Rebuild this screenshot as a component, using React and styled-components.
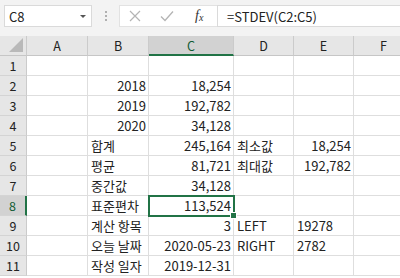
import React from 'react';
import styled, { createGlobalStyle } from 'styled-components';

const GlobalStyle = createGlobalStyle`
  html, body {
    margin: 0;
    padding: 0;
    background: #ffffff;
    overflow: hidden;
  }
  body {
    font-family: "Noto Sans CJK KR", "Noto Sans", sans-serif;
  }
`;

const COLS = ['A', 'B', 'C', 'D', 'E', 'F'];

const rows = [
  {},
  { B: ['2018', 'r'], C: ['18,254', 'r'] },
  { B: ['2019', 'r'], C: ['192,782', 'r'] },
  { B: ['2020', 'r'], C: ['34,128', 'r'] },
  { B: ['합계', 'l'], C: ['245,164', 'r'], D: ['최소값', 'l'], E: ['18,254', 'r'] },
  { B: ['평균', 'l'], C: ['81,721', 'r'], D: ['최대값', 'l'], E: ['192,782', 'r'] },
  { B: ['중간값', 'l'], C: ['34,128', 'r'] },
  { B: ['표준편차', 'l'], C: ['113,524', 'r'] },
  { B: ['계산 항목', 'l'], C: ['3', 'r'], D: ['LEFT', 'l'], E: ['19278', 'l'] },
  { B: ['오늘 날짜', 'l'], C: ['2020-05-23', 'r'], D: ['RIGHT', 'l'], E: ['2782', 'l'] },
  { B: ['작성 일자', 'l'], C: ['2019-12-31', 'r'] },
];

function App() {
  return (
    <>
      <GlobalStyle />
      <Sheet>
        <FormulaBar>
          <NameBox>
            <span>C8</span>
            <DropArrow />
          </NameBox>
          <Grip>
            <i />
            <i />
            <i />
          </Grip>
          <ActionBox>
            <svg width="12" height="12" viewBox="0 0 12 12">
              <path d="M1 1 L11 11 M11 1 L1 11" stroke="#b4b4b4" strokeWidth="1.2" fill="none" />
            </svg>
            <svg width="14" height="12" viewBox="0 0 14 12">
              <path d="M1 6.5 L5 10.5 L13 1.5" stroke="#b4b4b4" strokeWidth="1.3" fill="none" />
            </svg>
            <Fx>
              f<sub>x</sub>
            </Fx>
          </ActionBox>
          <FormulaInput>=STDEV(C2:C5)</FormulaInput>
        </FormulaBar>

        <Grid>
          <Corner>
            <svg width="16" height="16" viewBox="0 0 16 16">
              <path d="M15 1 L15 15 L1 15 Z" fill="#b9b9b9" />
            </svg>
          </Corner>
          {COLS.map((c) => (
            <ColHead key={c} $active={c === 'C'}>
              {c}
            </ColHead>
          ))}

          {rows.map((row, i) => {
            const n = i + 1;
            return (
              <React.Fragment key={n}>
                <RowHead $active={n === 8}>{n}</RowHead>
                {COLS.map((c) => {
                  const v = row[c];
                  const sel = n === 8 && c === 'C';
                  return (
                    <Cell key={c} $align={v ? v[1] : 'l'} $selected={sel}>
                      {v ? v[0] : ''}
                      {sel && <Handle />}
                    </Cell>
                  );
                })}
              </React.Fragment>
            );
          })}
        </Grid>
      </Sheet>
    </>
  );
}

export default App;

const Sheet = styled.div`
  width: 400px;
  height: 278px;
  overflow: hidden;
  background: #ffffff;
`;

const FormulaBar = styled.div`
  height: 36px;
  background: #f3f3f3;
  display: flex;
  align-items: flex-start;
  padding: 5px 0 0 4px;
  box-sizing: border-box;
`;

const NameBox = styled.div`
  width: 88px;
  height: 22px;
  box-sizing: border-box;
  background: #ffffff;
  border: 1px solid #dadada;
  display: flex;
  align-items: center;
  justify-content: space-between;
  padding: 0 5px 0 4px;
  font-size: 13px;
  color: #222;
`;

const DropArrow = styled.span`
  width: 0;
  height: 0;
  border-left: 3px solid transparent;
  border-right: 3px solid transparent;
  border-top: 3px solid #555;
`;

const Grip = styled.div`
  width: 27px;
  height: 22px;
  display: flex;
  flex-direction: column;
  align-items: center;
  justify-content: center;
  gap: 2px;

  i {
    width: 2px;
    height: 2px;
    background: #9a9a9a;
    border-radius: 1px;
  }
`;

const ActionBox = styled.div`
  width: 98px;
  height: 22px;
  box-sizing: border-box;
  background: #ffffff;
  border: 1px solid #e2e2e2;
  border-right: none;
  display: flex;
  align-items: center;
  padding-left: 9px;
  gap: 19px;
`;

const Fx = styled.span`
  font-family: "Liberation Serif", serif;
  font-style: italic;
  font-size: 14px;
  color: #333;
  margin-left: 2px;

  sub {
    font-size: 10px;
    vertical-align: -1px;
  }
`;

const FormulaInput = styled.div`
  flex: 1;
  height: 22px;
  box-sizing: border-box;
  background: #ffffff;
  border: 1px solid #dadada;
  border-right: none;
  display: flex;
  align-items: center;
  padding-left: 9px;
  font-size: 13px;
  color: #222;
`;

const Grid = styled.div`
  display: grid;
  grid-template-columns: 27px 61px 61px 85px 60px 60px 60px;
  grid-auto-rows: 20px;
  font-size: 13px;
  color: #222;
`;

const HeadBase = styled.div`
  box-sizing: border-box;
  background: #e6e6e6;
  border-right: 1px solid #cbcbcb;
  border-bottom: 1px solid #c6c6c6;
  display: flex;
  align-items: center;
  justify-content: center;
  font-size: 12.5px;
  color: #222;
`;

const Corner = styled(HeadBase)`
  justify-content: flex-end;
  align-items: flex-end;
  padding: 0 2px 2px 0;
`;

const ColHead = styled(HeadBase)`
  background: ${(p) => (p.$active ? '#d2d2d2' : '#e6e6e6')};
  color: ${(p) => (p.$active ? '#0f5a32' : '#222')};
  border-bottom: ${(p) => (p.$active ? '2px solid #217346' : '1px solid #c6c6c6')};
  padding-top: ${(p) => (p.$active ? '1px' : '0')};
`;

const RowHead = styled(HeadBase)`
  background: ${(p) => (p.$active ? '#d2d2d2' : '#e6e6e6')};
  color: ${(p) => (p.$active ? '#0f5a32' : '#222')};
  border-right: ${(p) => (p.$active ? '2px solid #217346' : '1px solid #cbcbcb')};
  border-bottom: 1px solid #d4d4d4;
`;

const Cell = styled.div`
  position: relative;
  box-sizing: border-box;
  border-right: 1px solid #dedede;
  border-bottom: 1px solid #dedede;
  display: flex;
  align-items: flex-end;
  justify-content: ${(p) => (p.$align === 'r' ? 'flex-end' : 'flex-start')};
  padding: 0 2px 1px 3px;
  white-space: nowrap;
  line-height: 17px;
  outline: ${(p) => (p.$selected ? '2px solid #217346' : 'none')};
  outline-offset: -1px;
  z-index: ${(p) => (p.$selected ? 1 : 0)};
`;

const Handle = styled.span`
  position: absolute;
  right: -4px;
  bottom: -4px;
  width: 5px;
  height: 5px;
  background: #217346;
  border: 1px solid #ffffff;
`;
